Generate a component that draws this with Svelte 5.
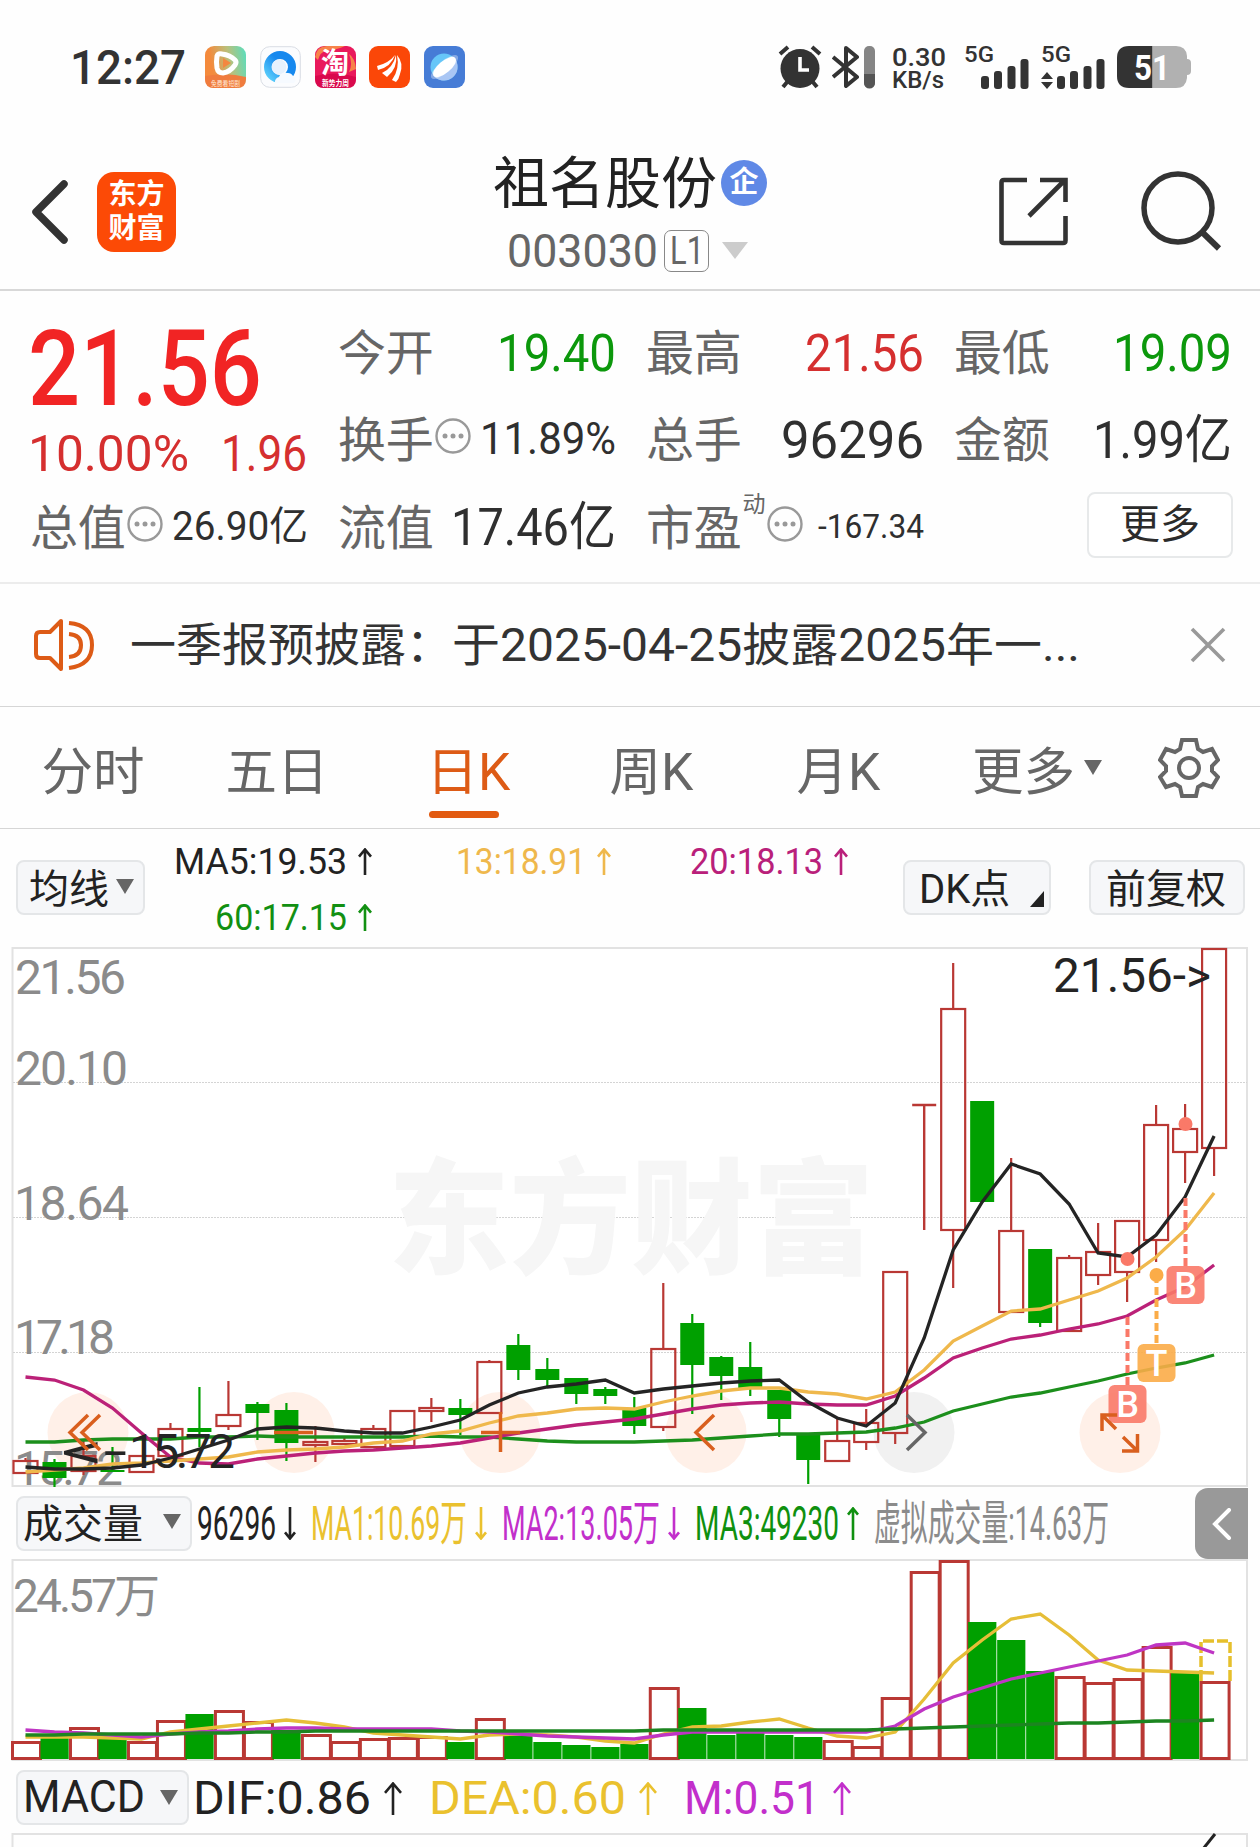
<script>
  const apps = ['video', 'qq', 'taobao', 'eastmoney', 'browser'];

  let activeTab = '日K';
  const tabs = [
    { name: '分时', width: 186 },
    { name: '五日', width: 182 },
    { name: '日K', width: 201 },
    { name: '周K', width: 165 },
    { name: '月K', width: 209 }
  ];

  // [color, body top, body bottom, wick top, wick bottom]
  const candles = [
    ['r', 1461, 1473, 1458, 1473], ['g', 1462, 1478, 1459, 1487], ['r', 1456, 1471, 1439, 1475],
    ['g', 1470, 1472, 1447, 1472], ['r', 1456, 1472, 1456, 1472], ['r', 1429, 1456, 1423, 1456],
    ['g', 1428, 1432, 1387, 1447], ['r', 1415, 1426, 1381, 1430], ['g', 1404, 1413, 1402, 1440],
    ['g', 1410, 1443, 1403, 1461], ['r', 1442, 1445, 1426, 1462], ['r', 1441, 1444, 1436, 1444],
    ['r', 1429, 1447, 1425, 1447], ['r', 1411, 1446, 1411, 1446], ['r', 1408, 1411, 1398, 1422],
    ['g', 1408, 1415, 1399, 1435], ['r', 1362, 1413, 1360, 1413], ['g', 1345, 1370, 1334, 1380],
    ['g', 1369, 1380, 1358, 1386], ['g', 1378, 1394, 1378, 1404], ['g', 1389, 1396, 1387, 1404],
    ['g', 1408, 1426, 1397, 1434], ['r', 1349, 1427, 1283, 1431], ['g', 1323, 1365, 1314, 1414],
    ['g', 1357, 1376, 1356, 1400], ['g', 1367, 1388, 1342, 1396], ['g', 1390, 1419, 1390, 1437],
    ['g', 1435, 1460, 1433, 1484], ['r', 1441, 1461, 1419, 1461], ['r', 1423, 1442, 1409, 1450],
    ['r', 1272, 1433, 1272, 1444], ['r', 1105, 1105, 1105, 1230], ['r', 1009, 1230, 963, 1288],
    ['g', 1101, 1202, 1101, 1202], ['r', 1231, 1312, 1158, 1312], ['g', 1249, 1323, 1249, 1327],
    ['r', 1258, 1331, 1255, 1331], ['r', 1252, 1275, 1223, 1285], ['r', 1221, 1272, 1221, 1302],
    ['r', 1125, 1240, 1105, 1262], ['r', 1129, 1152, 1104, 1183], ['r', 949, 1148, 949, 1176]
  ];

  const ma60 = [1442, 1442, 1440, 1439, 1439, 1439, 1437, 1437, 1436, 1437, 1437, 1437, 1437, 1437, 1436, 1437, 1437, 1439, 1441, 1442, 1442, 1442, 1441, 1440, 1438, 1436, 1434, 1434, 1433, 1432, 1428, 1422, 1411, 1404, 1397, 1393, 1387, 1381, 1374, 1368, 1363, 1355];
  const ma20 = [1377, 1380, 1390, 1408, 1433, 1457, 1463, 1464, 1459, 1456, 1453, 1451, 1450, 1448, 1446, 1443, 1438, 1433, 1429, 1425, 1422, 1419, 1414, 1409, 1405, 1403, 1402, 1404, 1405, 1405, 1396, 1378, 1358, 1348, 1339, 1335, 1329, 1324, 1316, 1300, 1287, 1265];
  const ma13 = [1472, 1470, 1468, 1464, 1463, 1461, 1459, 1457, 1452, 1450, 1449, 1447, 1443, 1441, 1434, 1431, 1423, 1416, 1413, 1409, 1408, 1409, 1402, 1396, 1391, 1388, 1388, 1392, 1394, 1399, 1392, 1370, 1341, 1326, 1311, 1309, 1300, 1291, 1278, 1257, 1230, 1193];
  const ma5 = [1467, 1469, 1469, 1468, 1465, 1458, 1449, 1440, 1429, 1427, 1428, 1431, 1433, 1433, 1427, 1420, 1405, 1393, 1387, 1384, 1380, 1393, 1389, 1386, 1383, 1381, 1380, 1402, 1418, 1426, 1403, 1338, 1250, 1202, 1164, 1174, 1204, 1253, 1257, 1235, 1197, 1136];

  const volumes = [1742, 1738, 1728, 1739, 1742, 1721, 1715, 1711, 1722, 1731, 1735, 1742, 1739, 1738, 1737, 1743, 1719, 1736, 1743, 1746, 1748, 1745, 1688, 1709, 1736, 1731, 1736, 1738, 1741, 1747, 1698, 1572, 1561, 1623, 1641, 1672, 1677, 1683, 1679, 1647, 1674, 1682];
  const volGreen = [1, 3, 6, 9, 15, 17, 18, 19, 20, 21, 23, 24, 25, 26, 27, 33, 34, 35, 40];
  const vma1 = [1737, 1737, 1737, 1738, 1739, 1732, 1729, 1726, 1723, 1720, 1723, 1727, 1733, 1735, 1737, 1739, 1735, 1734, 1735, 1737, 1741, 1743, 1734, 1727, 1726, 1722, 1719, 1728, 1736, 1738, 1732, 1699, 1663, 1640, 1619, 1614, 1635, 1660, 1670, 1671, 1672, 1673];
  const vma2 = [1730, 1732, 1733, 1735, 1737, 1734, 1732, 1731, 1729, 1728, 1728, 1729, 1729, 1729, 1729, 1731, 1732, 1734, 1736, 1737, 1738, 1739, 1735, 1732, 1732, 1732, 1732, 1732, 1732, 1732, 1726, 1709, 1697, 1688, 1679, 1673, 1667, 1661, 1655, 1645, 1643, 1653];
  const vma3 = [1735, 1735, 1734, 1734, 1734, 1734, 1733, 1733, 1732, 1732, 1731, 1731, 1731, 1731, 1731, 1731, 1731, 1731, 1731, 1731, 1731, 1731, 1730, 1730, 1730, 1730, 1730, 1730, 1730, 1730, 1729, 1728, 1727, 1726, 1725, 1724, 1723, 1723, 1722, 1721, 1721, 1720];

  const cx = (i) => 25.5 + i * 28.99;
  const line = (values) => values.map((y, i) => `${cx(i).toFixed(1)},${y}`).join(' ');

  const marks = [
    { letter: 'B', x: 1185.5, dot: 1124, from: 1198, y: 1285, color: '#fa7968' },
    { letter: 'T', x: 1156.5, dot: 1275, from: 1275, y: 1363, color: '#fbac48' },
    { letter: 'B', x: 1127.5, dot: 1259, from: 1317, y: 1404, color: '#fa7968' }
  ];
</script>

<!-- one line of text set to an exact width; the box is as high as the capitals -->
{#snippet fit(text, width, size, cls)}
  <svg class="fit {cls || ''}" {width} height={size * 0.711} font-size={size}>
    <text x="0" y={size * 0.711} textLength={width} lengthAdjust="spacingAndGlyphs">{text}</text>
  </svg>
{/snippet}

{#snippet arrow(dir, w, h)}
  <svg class="arrow {dir}" width={w} height={h} viewBox="0 0 {w} {h}">
    <path d="M{w / 2} {h}V2M1 {w * 0.55 + 1}L{w / 2} 1.5L{w - 1} {w * 0.55 + 1}" />
  </svg>
{/snippet}

{#snippet more()}
  <svg class="more-dots" width="36" height="36" viewBox="0 0 36 36">
    <circle cx="18" cy="18" r="16.5" fill="none" stroke="#999" stroke-width="2.4" />
    <circle cx="10" cy="18" r="2.5" /><circle cx="18" cy="18" r="2.5" /><circle cx="26" cy="18" r="2.5" />
  </svg>
{/snippet}

{#snippet signal()}
  <svg class="signal" width="48" height="30" viewBox="0 0 48 30">
    <rect x="0" y="17" width="8" height="13" rx="3" /><rect x="13" y="12" width="8" height="18" rx="3" />
    <rect x="26.5" y="7" width="8" height="23" rx="3" /><rect x="39.5" y="0" width="8" height="30" rx="3" />
  </svg>
{/snippet}

<main>
  <div class="status">
    {@render fit('12:27', 116, 48, 'clock')}
    <div class="apps">
      {#each apps as app}
        <svg width="41" height="42" viewBox="0 0 41 42">
          {#if app === 'video'}
            <defs>
              <linearGradient id="gv" x1="0" y1="0.2" x2="1" y2="0"><stop offset="0.1" stop-color="#f48a3c" /><stop offset="0.55" stop-color="#b9c07c" /><stop offset="1" stop-color="#55dfc0" /></linearGradient>
            </defs>
            <rect width="41" height="42" rx="9" fill="url(#gv)" />
            <path d="M0 30Q22 26 41 31V33Q41 42 32 42H9Q0 42 0 33Z" fill="#f07c3e" />
            <path d="M12 10Q13 7 17 8Q25 9 30 14Q32 16 30 19Q25 26 18 27Q13 27 12 22Q11 16 12 10Z" fill="none" stroke="#fff" stroke-width="5" stroke-linejoin="round" />
            <path d="M18 12L26 17L18 22Z" fill="#f4873f" />
            <text x="6" y="40" font-size="7.4" textLength="29" lengthAdjust="spacingAndGlyphs" fill="#ffe9d8">免费看短剧</text>
          {:else if app === 'qq'}
            <defs>
              <linearGradient id="gq" x1="0" y1="1" x2="1" y2="0"><stop offset="0" stop-color="#5cd0fb" /><stop offset="0.6" stop-color="#1688ee" /></linearGradient>
            </defs>
            <rect x="0.7" y="0.7" width="39.6" height="40.6" rx="9" fill="#fbfcfe" stroke="#d9dde4" />
            <circle cx="20" cy="21" r="12" fill="none" stroke="url(#gq)" stroke-width="8" />
            <circle cx="19" cy="21" r="7.5" fill="#e6f1fd" />
            <path d="M15 37a5 5 0 0 1 4-6a6 6 0 0 1 8-4a6 6 0 0 1 6 3a4 4 0 0 1 1 7Z" fill="#f6faff" />
          {:else if app === 'taobao'}
            <rect width="41" height="42" rx="9" fill="#e9195c" />
            <path d="M0 11Q2 0 12 0H30Q22 4 12 4Q5 6 3 14ZM34 8Q40 12 41 23L34 26Q38 18 34 8Z" fill="#f7834a" />
            <path d="M0 30Q22 25 41 31V33Q41 42 32 42H9Q0 42 0 33Z" fill="#d9094d" />
            <text x="6" y="27" font-size="28" font-weight="700" fill="#fff">淘</text>
            <text x="7" y="40" font-size="8" font-weight="700" textLength="27" lengthAdjust="spacingAndGlyphs" fill="#fff">新势力周</text>
          {:else if app === 'eastmoney'}
            <rect width="41" height="42" rx="9" fill="#fb4708" />
            <path d="M8 20Q20 17 26 9Q22 21 9 24ZM13 27Q24 22 27 9Q29 22 18 31ZM23 34Q31 23 28 9Q35 17 31 28Q30 33 27 36Z" fill="#fff" />
          {:else}
            <rect width="41" height="42" rx="9" fill="#467cd6" />
            <circle cx="20" cy="21" r="13.5" fill="#66c6f8" />
            <path d="M31 13A13.5 13.5 0 0 1 9 29Z" fill="#a9c6f4" />
            <ellipse cx="20.5" cy="21" rx="17" ry="6" transform="rotate(-40 20.5 21)" fill="#fff" opacity="0.35" />
            <ellipse cx="20.5" cy="21" rx="14" ry="6" transform="rotate(-40 20.5 21)" fill="#fff" />
          {/if}
        </svg>
      {/each}
    </div>
    <div class="system">
      <svg width="44" height="44" viewBox="0 0 44 44">
        <circle cx="22" cy="23.5" r="19.5" fill="#333" />
        <path d="M2 9L10 2M42 9L34 2M5 42L10 36M39 42L34 36" stroke="#333" stroke-width="4" />
        <path d="M22 12V25H31" fill="none" stroke="#fff" stroke-width="3.6" />
      </svg>
      <svg class="bt" width="43" height="44" viewBox="0 0 43 44">
        <path d="M1 12L25 32L14 41V3L25 12L1 32" fill="none" stroke="#333" stroke-width="4" stroke-linejoin="round" />
        <rect x="32" y="1" width="11" height="42" rx="5" fill="#858585" />
        <path d="M32 29H43V38A5 5 0 0 1 32 38Z" fill="#555" />
      </svg>
      <div class="speed">
        {@render fit('0.30', 54, 26.5)}
        {@render fit('KB/s', 52, 23.5)}
      </div>
      <div class="sim">
        {@render fit('5G', 30, 22)}
        {@render signal()}
      </div>
      <div class="sim second">
        {@render fit('5G', 30, 22)}
        <div class="data">
          <svg width="12" height="17" viewBox="0 0 12 17"><path d="M6 0L12 7H0ZM6 17L0 10H12Z" fill="#333" /></svg>
          {@render signal()}
        </div>
      </div>
      <svg class="battery" width="75" height="42" viewBox="0 0 75 42">
        <path d="M36 0H59Q69 0 70 10V13Q74 13 74 17V25Q74 29 70 29V32Q69 42 59 42H36Z" fill="#b1b1b1" />
        <path d="M12 0H35.500V42H12Q0 42 0 30V12Q0 0 12 0Z" fill="#333" />
        <text x="17" y="33.500" font-size="35" font-weight="700" textLength="36" lengthAdjust="spacingAndGlyphs" fill="#fff">51</text>
      </svg>
    </div>
  </div>

  <header>
    <svg class="back" width="44" height="72" viewBox="0 0 44 72">
      <path d="M36 8L8 36L36 64" fill="none" stroke="#333" stroke-width="7.500" stroke-linecap="round" stroke-linejoin="round" />
    </svg>
    <div class="logo"><span>东方</span><span>财富</span></div>
    <div class="title">
      <div class="name">祖名股份<span class="badge">企</span></div>
      <div class="code">
        {@render fit('003030', 151, 46)}
        <span class="level">{@render fit('L1', 34, 38)}</span>
        <svg width="26" height="17" viewBox="0 0 26 17"><path d="M0 0H26L13 17Z" fill="#ccc" /></svg>
      </div>
    </div>
    <svg class="share" width="70" height="70" viewBox="0 0 70 70">
      <path d="M28 3H5Q2.500 3 2.500 5.500V63.500Q2.500 66 5 66H64Q66.500 66 66.500 63.500V39M41 3H66.500V25M66 3L30 39" fill="none" stroke="#333" stroke-width="4.600" />
    </svg>
    <svg class="search" width="84" height="84" viewBox="0 0 84 84">
      <circle cx="38" cy="38" r="34" fill="none" stroke="#333" stroke-width="5.500" />
      <path d="M62 62L79 78.500" stroke="#333" stroke-width="6" />
    </svg>
  </header>

  <section class="quote">
    <div class="price">
      {@render fit('21.56', 234, 106, 'big')}
      <div class="change">{@render fit('10.00%', 161, 49.5)}{@render fit('1.96', 86, 49.5)}</div>
    </div>
    <div class="cell">今开<span class="down">{@render fit('19.40', 119, 52)}</span></div>
    <div class="cell">最高<span class="up">{@render fit('21.56', 119, 52)}</span></div>
    <div class="cell">最低<span class="down">{@render fit('19.09', 119, 52)}</span></div>
    <div class="cell">换手{@render more()}<span>{@render fit('11.89%', 136, 44)}</span></div>
    <div class="cell">总手<span>{@render fit('96296', 143, 52)}</span></div>
    <div class="cell">金额<span>{@render fit('1.99亿', 139, 52)}</span></div>
    <div class="cell">总值{@render more()}<span>{@render fit('26.90亿', 136, 40)}</span></div>
    <div class="cell">流值<span>{@render fit('17.46亿', 165, 52)}</span></div>
    <div class="cell">市盈<sup>动</sup>{@render more()}<span>{@render fit('-167.34', 106, 34)}</span></div>
    <div class="cell"><button class="more-btn">更多</button></div>
  </section>

  <section class="news">
    <svg width="64" height="56" viewBox="0 0 64 56">
      <path d="M28 4V52L17 41H7Q3 41 3 37V19Q3 15 7 15H17Z" fill="none" stroke="#dd5b16" stroke-width="4" stroke-linejoin="round" />
      <path d="M36 17Q48 18 48 28Q48 39 36 40M36 6Q59 8 59 28Q59 48 36 51" fill="none" stroke="#dd5b16" stroke-width="4" />
    </svg>
    <div class="headline">
      {@render fit('一季报预披露：', 322, 46)}
      {@render fit('于2025-04-25披露2025年一...', 628, 46)}
    </div>
    <svg class="close" width="36" height="36" viewBox="0 0 36 36"><path d="M2 2L34 34M34 2L2 34" stroke="#999" stroke-width="3.600" /></svg>
  </section>

  <nav>
    {#each tabs as tab}
      <button class="tab" class:active={activeTab === tab.name} style="width: {tab.width}px" on:click={() => activeTab = tab.name}>
        <span>{tab.name}</span>
      </button>
    {/each}
    <button class="tab more-tab">更多<svg width="18" height="15" viewBox="0 0 18 15"><path d="M0 0H18L9 15Z" fill="#666" /></svg></button>
    <svg class="gear" width="62" height="62" viewBox="0 0 62 62">
      <path d="M24 3H38L40 12L45 15L54 12L60 23L54 29V34L60 40L54 50L45 47L40 50L38 59H24L22 50L17 47L8 50L2 40L8 34V29L2 23L8 12L17 15L22 12Z" fill="none" stroke="#666" stroke-width="4" />
      <circle cx="31" cy="31" r="10" fill="none" stroke="#666" stroke-width="4" />
    </svg>
  </nav>

  <section class="averages">
    <button class="chip ma">均线<svg width="18" height="15" viewBox="0 0 18 15"><path d="M0 0H18L9 15Z" fill="#666" /></svg></button>
    <div class="legend">
      <span class="l5">{@render fit('MA5:19.53', 173, 37)}{@render arrow('', 14, 27)}</span>
      <span class="l13">{@render fit('13:18.91', 130, 37)}{@render arrow('', 14, 27)}</span>
      <span class="l20">{@render fit('20:18.13', 133, 37)}{@render arrow('', 14, 27)}</span>
      <span class="l60">{@render fit('60:17.15', 132, 37)}{@render arrow('', 14, 27)}</span>
    </div>
    <button class="chip dk">DK点<svg width="14" height="16" viewBox="0 0 14 16"><path d="M14 0V16H0Z" fill="#222" /></svg></button>
    <button class="chip fq">前复权</button>
  </section>

  <svg class="kline" width="1260" height="541" viewBox="0 947 1260 541">
    <rect x="12.500" y="948" width="1234.500" height="538" fill="#fff" stroke="#e2e2e2" stroke-width="2" />
    {#each [1082.5, 1217.5, 1352.5] as y}
      <line x1="13" x2="1247" y1={y} y2={y} stroke="#d4d4d4" stroke-width="1" stroke-dasharray="2 1" />
    {/each}
    <text x="388" y="1264" class="watermark" textLength="486" lengthAdjust="spacingAndGlyphs">东方财富</text>

    <g fill="#ff6a1a" fill-opacity="0.1">
      <circle cx="88" cy="1432.500" r="40.500" /><circle cx="294" cy="1432.500" r="40.500" /><circle cx="500" cy="1432.500" r="40.500" />
      <circle cx="706" cy="1432.500" r="40.500" /><circle cx="1120" cy="1432.500" r="40.500" />
    </g>
    <circle cx="914" cy="1432.500" r="40.500" fill="#f1f1f1" />

    <g class="axis">
      <text x="15" y="994" textLength="111">21.56</text>
      <text x="15" y="1085" textLength="113">20.10</text>
      <text x="14" y="1220" textLength="115">18.64</text>
      <text x="14" y="1354" textLength="101">17.18</text>
      <text x="14" y="1485" textLength="109">15.72</text>
    </g>

    {#each candles as [color, top, bottom, high, low], i}
      {#if color === 'g'}
        <line x1={cx(i)} x2={cx(i)} y1={high} y2={low} stroke="#00a000" stroke-width="2.2" />
        <rect x={cx(i) - 12} y={top} width="24" height={bottom - top} fill="#00a000" />
      {:else if top === bottom}
        <path d="M{cx(i) - 12} {top}H{cx(i) + 12}M{cx(i)} {top}V{low}" stroke="#b93834" stroke-width="2.4" />
      {:else}
        <path d="M{cx(i)} {high}V{top}M{cx(i)} {bottom}V{low}" stroke="#b93834" stroke-width="2.2" />
        <rect x={cx(i) - 12} y={top} width="24" height={bottom - top} fill="none" stroke="#b93834" stroke-width="2.2" />
      {/if}
    {/each}

    <g fill="none" stroke-width="3.300">
      <polyline points={line(ma60)} stroke="#1c8f1c" />
      <polyline points={line(ma20)} stroke="#bb2178" />
      <polyline points={line(ma13)} stroke="#efb84c" />
      <polyline points={line(ma5)} stroke="#242424" />
    </g>

    <g class="extreme">
      <text x="1053" y="992" textLength="158" lengthAdjust="spacingAndGlyphs">21.56-&gt;</text>
      <text x="129" y="1468" textLength="106">15.72</text>
      <text x="61" y="1468" textLength="66" lengthAdjust="spacingAndGlyphs">&lt;-</text>
    </g>

    {#each marks as m}
      <circle cx={m.x} cy={m.dot} r="7" fill={m.color} />
      <line x1={m.x} x2={m.x} y1={m.from} y2={m.y - 19} stroke={m.color} stroke-width="4" stroke-dasharray="8 4" />
      <rect x={m.x - 19} y={m.y - 19} width="38" height="38" rx="6" fill={m.color} fill-opacity="0.9" />
      <text x={m.x} y={m.y + 13} class="mark">{m.letter}</text>
    {/each}

    <g fill="none" stroke="#d95f1e" stroke-width="3.500">
      <path d="M88 1415L70 1432.500L88 1450M100 1415L82 1432.500L100 1450" />
      <path d="M274 1432.500H313M481 1432.500H520M500.500 1412V1452" />
      <path d="M714 1415L696 1432.500L714 1450" />
      <path d="M1117 1415H1102V1431M1102 1415L1116 1429M1122 1451H1137.500V1434M1137.500 1451L1123 1437" />
      <path d="M907 1415L925 1432.500L907 1450" stroke="#666" />
    </g>
  </svg>

  <section class="indicator">
    <button class="chip vol">成交量<svg width="18" height="15" viewBox="0 0 18 15"><path d="M0 0H18L9 15Z" fill="#666" /></svg></button>
    <div class="values">
      <span class="black">{@render fit('96296', 79, 48)}{@render arrow('down-arrow', 12, 33)}</span>
      <span class="yellow">{@render fit('MA1:10.69万', 156, 48)}{@render arrow('down-arrow', 12, 33)}</span>
      <span class="purple">{@render fit('MA2:13.05万', 158, 48)}{@render arrow('down-arrow', 12, 33)}</span>
      <span class="green">{@render fit('MA3:49230', 144, 48)}{@render arrow('', 12, 33)}</span>
      <span class="grey">{@render fit('虚拟成交量:14.63万', 235, 48)}</span>
    </div>
    <button class="drawer" aria-label="展开">
      <svg width="20" height="32" viewBox="0 0 20 32"><path d="M17 2L3 16L17 30" fill="none" stroke="#fff" stroke-width="4" stroke-linecap="round" /></svg>
    </button>
  </section>

  <svg class="volume" width="1260" height="202" viewBox="0 1559 1260 202">
    <rect x="12.500" y="1560" width="1234.500" height="200" fill="#fff" stroke="#e2e2e2" stroke-width="2" />
    {#each volumes as top, i}
      {#if volGreen.includes(i)}
        <rect x={cx(i) - 14} y={top - 1} width="28.200" height={1760 - top} fill="#00a000" />
      {:else}
        <rect x={cx(i) - 13} y={top + 0.5} width="28" height={1758 - top} fill="#fff" stroke="#b93834" stroke-width="3" />
      {/if}
    {/each}
    <path d="M1201 1681V1641H1230V1681" fill="none" stroke="#e6c02c" stroke-width="3.500" stroke-dasharray="11 3" />
    <g fill="none" stroke-width="3.300">
      <polyline points={line(vma1)} stroke="#e6be38" />
      <polyline points={line(vma2)} stroke="#bf35c4" />
      <polyline points={line(vma3)} stroke="#1c8520" />
    </g>
    <g class="axis"><text x="13" y="1612" font-size="46" textLength="147">24.57万</text></g>
  </svg>

  <section class="indicator macd">
    <button class="chip">
      {@render fit('MACD', 122, 44)}
      <svg width="18" height="15" viewBox="0 0 18 15"><path d="M0 0H18L9 15Z" fill="#666" /></svg>
    </button>
    <div class="values">
      <span class="black">{@render fit('DIF:0.86', 178, 47)}{@render arrow('', 18, 33)}</span>
      <span class="yellow">{@render fit('DEA:0.60', 197, 47)}{@render arrow('', 18, 33)}</span>
      <span class="purple">{@render fit('M:0.51', 136, 47)}{@render arrow('', 18, 33)}</span>
    </div>
  </section>
  <svg class="macd-chart" width="1260" height="14" viewBox="0 1833 1260 14">
    <path d="M12.500 1850V1834H1247V1850" fill="none" stroke="#e2e2e2" stroke-width="2" />
    <path d="M1203 1849L1215 1834" stroke="#222" stroke-width="3" />
  </svg>
</main>

<style>
  :global(body) {
    background: #fff;
  }

  main {
    width: 1260px;
    height: 1847px;
    overflow: hidden;
    background: #fefefe;
    color: #2b2b2b;
    font-family: Roboto, 'Noto Sans CJK SC', sans-serif;
  }

  svg {
    display: block;
    flex: none;
  }

  button {
    font: inherit;
    color: inherit;
    background: none;
    border: none;
    padding: 0;
    margin: 0;
  }

  .fit {
    overflow: visible;
    fill: currentColor;
  }

  .arrow {
    fill: none;
    stroke: currentColor;
    stroke-width: 2.6;
  }

  .down-arrow {
    transform: scaleY(-1);
  }

  .status {
    display: flex;
    align-items: center;
    height: 134px;
    padding: 0 69px 0 70px;
    box-sizing: border-box;
    color: #333;
  }

  .clock {
    font-weight: 500;
  }

  .apps {
    display: flex;
    gap: 13.8px;
    margin-left: 19px;
  }

  .system {
    display: flex;
    align-items: center;
    margin-left: auto;
    font-weight: 500;
  }

  .bt {
    margin-left: 10px;
  }

  .speed {
    margin-left: 17px;
    display: flex;
    flex-direction: column;
    gap: 5px;
  }

  .sim {
    margin-left: 18px;
    height: 42px;
    width: 64px;
  }

  .sim > .signal {
    margin: -3px 0 0 17px;
  }

  .sim.second {
    margin-left: 13px;
  }

  .data {
    display: flex;
    align-items: flex-end;
    gap: 4px;
    margin-top: -3px;
  }

  .signal {
    fill: #333;
  }

  .battery {
    margin-left: 12px;
    margin-right: -1px;
  }

  header {
    display: flex;
    align-items: center;
    height: 157px;
    padding: 0 36px 0 28px;
    box-sizing: border-box;
    border-bottom: 2px solid #d8d8d8;
  }

  .logo {
    width: 79px;
    height: 80px;
    margin-left: 25px;
    border-radius: 17px;
    background: #fc4a06;
    color: #fff;
    display: flex;
    flex-direction: column;
    align-items: center;
    justify-content: center;
    font-size: 28px;
    line-height: 34px;
    font-weight: 700;
  }

  .title {
    flex: 1;
    margin-left: 85px;
    display: flex;
    flex-direction: column;
    align-items: center;
  }

  .name {
    display: flex;
    align-items: center;
    font-size: 56px;
    line-height: 64px;
    color: #222;
  }

  .badge {
    width: 46px;
    height: 46px;
    margin: -2px 0 0 4px;
    border-radius: 50%;
    background: #6089e6;
    color: #fff;
    font-size: 29px;
    font-weight: 700;
    line-height: 44px;
    text-align: center;
  }

  .code {
    display: flex;
    align-items: center;
    margin: 14px 5px 0 0;
    color: #666;
  }

  .level {
    display: flex;
    align-items: center;
    justify-content: center;
    margin: 0 13px 0 6px;
    width: 43px;
    height: 40px;
    border: 1.5px solid #888;
    border-radius: 7px;
  }

  .search {
    margin-left: 71px;
  }

  .quote {
    display: grid;
    grid-template-columns: repeat(4, 277px);
    grid-template-rows: 87px 87px 88px;
    column-gap: 31px;
    height: 293px;
    padding: 17px 28px 0 30px;
    box-sizing: border-box;
    border-bottom: 2px solid #ececec;
  }

  .price {
    grid-row: span 2;
    padding-top: 22px;
    margin-left: -2px;
    color: #d52f2f;
  }

  .big {
    color: #f12424;
    font-weight: 500;
  }

  .change {
    display: flex;
    justify-content: space-between;
    margin-top: 31px;
  }

  .cell {
    display: flex;
    align-items: center;
    padding-top: 5px;
    font-size: 48px;
    line-height: 1;
    letter-spacing: -0.3px;
    color: #666;
    white-space: nowrap;
  }

  .cell span {
    margin: -4px -1px 0 auto;
    letter-spacing: 0;
    color: #2f2f2f;
  }

  .cell span.up {
    color: #d52f2f;
  }

  .cell span.down {
    color: #0c980c;
  }

  .more-dots {
    margin: -10px 0 0 2px;
    fill: #999;
  }

  sup {
    font-size: 23px;
    line-height: 1;
    margin: -48px 0 0 1px;
    vertical-align: baseline;
  }

  .more-btn {
    margin: -7px -2px 0 auto;
    width: 146px;
    height: 66px;
    border: 2px solid #e7e9ea;
    border-radius: 8px;
    font-size: 40px;
    letter-spacing: 0;
    color: #2b2b2b;
    background: #fff;
  }

  .news {
    display: flex;
    align-items: center;
    height: 123px;
    padding: 0 34px 0 33px;
    box-sizing: border-box;
    border-bottom: 1.5px solid #d6d6d6;
    color: #333;
  }

  .headline {
    display: flex;
    margin: -1px 0 0 33px;
  }

  .close {
    margin-left: auto;
  }

  nav {
    display: flex;
    align-items: center;
    height: 122px;
    padding-right: 40px;
    box-sizing: border-box;
    border-bottom: 1.5px solid #d6d6d6;
  }

  .tab {
    height: 121px;
    font-size: 51.5px;
    color: #666;
    text-align: center;
  }

  .tab span {
    position: relative;
  }

  .active {
    color: #dd5b16;
  }

  .active span::after {
    content: '';
    position: absolute;
    left: 2px;
    bottom: -15px;
    width: 70px;
    height: 7px;
    border-radius: 4px;
    background: #e25a10;
  }

  .more-tab {
    display: flex;
    align-items: center;
    margin-left: 29px;
    gap: 9px;
  }

  .gear {
    margin-left: auto;
  }

  .averages {
    display: flex;
    height: 118px;
    padding: 31px 15px 0 16px;
    box-sizing: border-box;
  }

  .chip {
    display: flex;
    align-items: center;
    height: 55px;
    box-sizing: border-box;
    padding: 0 9px 3px 11px;
    border: 2px solid #e4e6e8;
    border-radius: 8px;
    background: #f6f7f9;
    font-size: 40px;
    color: #222;
    white-space: nowrap;
  }

  .chip.ma {
    width: 129px;
    justify-content: space-between;
  }

  .legend {
    display: grid;
    grid-template-columns: 198px 239px 237px;
    row-gap: 29px;
    width: 674px;
    margin: -12px 0 0 29px;
    align-content: start;
  }

  .legend span {
    display: flex;
    justify-content: flex-end;
    gap: 11px;
  }

  .l5 { color: #222; }
  .l13 { color: #efb84c; }
  .l20 { color: #b9207a; }
  .l60 { color: #129012; }

  .chip.dk {
    width: 148px;
    margin-left: auto;
    padding: 0 5px 3px 14px;
    justify-content: space-between;
  }

  .chip.dk svg {
    margin-top: 25px;
  }

  .chip.fq {
    width: 156px;
    margin-left: 38px;
    padding: 0 0 3px 15px;
  }

  .axis {
    fill: #8b8b8b;
    font-size: 48px;
  }

  .extreme {
    fill: #242424;
    font-size: 48px;
  }

  .watermark {
    fill: #f6f6f6;
    font-size: 125px;
    font-weight: 900;
  }

  .mark {
    fill: #fff;
    font-size: 36px;
    font-weight: 500;
    text-anchor: middle;
  }

  .indicator {
    display: flex;
    align-items: center;
    height: 71px;
    padding: 0 12px 0 16px;
    box-sizing: border-box;
  }

  .chip.vol {
    width: 176px;
    padding-left: 5px;
    padding-bottom: 5px;
    justify-content: space-between;
  }

  .values {
    display: flex;
    gap: 15px;
    margin-left: 5px;
  }

  .values span {
    display: flex;
    align-items: center;
    gap: 8px;
  }

  .black { color: #222; }
  .yellow { color: #eac12e; }
  .purple { color: #c22fcb; }
  .green { color: #0f900f; }
  .grey { color: #8b8b8b; }

  .drawer {
    width: 53px;
    height: 71px;
    margin-left: auto;
    padding-left: 17px;
    border-radius: 13px 0 0 13px;
    background: #999;
  }

  .macd {
    height: 72px;
  }

  .macd .chip {
    width: 173px;
    padding: 0 9px 0 5px;
    justify-content: space-between;
  }

  .macd .values {
    gap: 27px;
    margin: 2px 0 0 4px;
  }

  .macd .values span {
    gap: 13px;
  }
</style>
